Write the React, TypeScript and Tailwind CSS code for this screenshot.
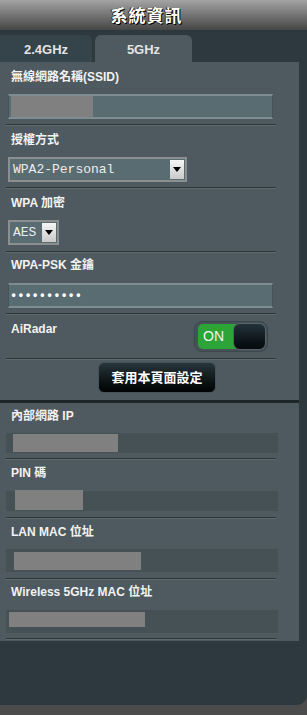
const sans = "font-['Liberation_Sans','Noto_Sans_CJK_TC',sans-serif]";
const mono = "font-['Liberation_Mono','DejaVu_Sans_Mono',monospace]";

function Sep({ pt }: { pt: string }) {
  return (
    <div className={`${pt} pl-[6px]`}>
      <div className="h-[2px] w-[270px] border-t border-b border-t-[#2c363a] border-b-[#5f6a6e]" />
    </div>
  );
}

function Label({ text, pt }: { text: string; pt: string }) {
  return (
    <div className={`${pt} pl-[11px]`}>
      <div className="h-[14px] text-[12px] font-bold leading-[14px] text-[#f2f2f2]">{text}</div>
    </div>
  );
}

function Select({ value, width }: { value: string; width: string }) {
  return (
    <div className={`${width} flex h-[25px] items-stretch border-2 border-[#8b8f90] bg-[#596c72]`}>
      <span className={`${mono} flex flex-1 items-center pl-[3px] text-[13px] text-[#ececec]`}>
        {value}
      </span>
      <span className="my-[1px] mr-[1px] flex w-[14px] items-center justify-center bg-gradient-to-b from-[#f6f6f6] to-[#c9c9c9]">
        <svg width="8" height="5" viewBox="0 0 8 5">
          <path d="M0 0h8L4 5z" fill="#000" />
        </svg>
      </span>
    </div>
  );
}

function InfoRow({
  label,
  pt,
  barPt,
  barH,
  block,
  sepPt,
}: {
  label: string;
  pt: string;
  barPt: string;
  barH: string;
  block: string;
  sepPt: string;
}) {
  return (
    <>
      <Label text={label} pt={pt} />
      <div className={`${barPt} pl-[6px]`}>
        <div className={`${barH} flex w-[272px] items-center bg-[#465156]`}>
          <div className={`${block} bg-[#808080]`} />
        </div>
      </div>
      <Sep pt={sepPt} />
    </>
  );
}

export default function App() {
  return (
    <div className={`${sans} h-[715px] w-[307px] bg-gradient-to-b from-[#3a3a3a] to-[#4c4c4c]`}>
      <div className="h-[705px] overflow-hidden rounded-br-[10px] bg-[#2e393f]">
        {/* Title */}
        <div className="flex h-[30px] items-center justify-center bg-gradient-to-b from-[#a4a4a4] to-[#474747] pt-[3px] pr-[14px]">
          <span className="text-[17px] font-bold tracking-[1px] text-white [text-shadow:1px_1px_0_#000,-1px_0_0_#222]">
            系統資訊
          </span>
        </div>

        {/* Tabs */}
        <div className="flex h-[32px] items-end gap-[3px]">
          <div className="flex h-[27px] w-[92px] items-center justify-center rounded-tr-[6px] bg-[#35434a] pt-[2px] text-[13px] font-bold text-[#e4e4e4]">
            2.4GHz
          </div>
          <div className="flex h-[27px] w-[97px] items-center justify-center rounded-t-[6px] bg-[#4e5a5f] pt-[2px] text-[13px] font-bold text-[#e4e4e4]">
            5GHz
          </div>
        </div>

        {/* Panel */}
        <div className="w-[299px] bg-[#4e5a5f] pb-[1px]">
          {/* SSID */}
          <Label text="無線網路名稱(SSID)" pt="pt-[8px]" />
          <div className="pl-[8px] pt-[10px]">
            <div className="flex h-[25px] w-[265px] items-stretch border-y-2 border-x border-y-[#7e8d91] border-x-[#44545a] bg-[#596c72] pl-[2px]">
              <div className="w-[82px] bg-[#808080]" />
            </div>
          </div>
          <Sep pt="pt-[5px]" />

          {/* Auth */}
          <Label text="授權方式" pt="pt-[7px]" />
          <div className="pl-[8px] pt-[10px]">
            <Select value="WPA2-Personal" width="w-[179px]" />
          </div>
          <Sep pt="pt-[5px]" />

          {/* WPA encryption */}
          <Label text="WPA 加密" pt="pt-[7px]" />
          <div className="pl-[8px] pt-[10px]">
            <Select value="AES" width="w-[51px]" />
          </div>
          <Sep pt="pt-[6px]" />

          {/* PSK */}
          <Label text="WPA-PSK 金鑰" pt="pt-[5px]" />
          <div className="pl-[8px] pt-[11px]">
            <div className="flex h-[25px] w-[265px] items-center border-y-2 border-x border-y-[#7e8d91] border-x-[#44545a] bg-[#596c72] pl-[1px]">
              <span className={`${mono} text-[12px] font-bold leading-none text-white`}>••••••••••</span>
            </div>
          </div>
          <Sep pt="pt-[5px]" />

          {/* AiRadar */}
          <div className="flex h-[43px] items-start justify-between">
            <Label text="AiRadar" pt="pt-[7px]" />
            <div className="pr-[31px] pt-[6px]">
              <div className="flex h-[31px] w-[74px] items-stretch rounded-[8px] border border-[#3b474b] bg-[#465257] p-[1px]">
                <div className="my-[1px] ml-[2px] flex w-[38px] items-center rounded-l-[5px] bg-[#2ca438] pl-[5px] text-[14px] font-medium text-[#eef5ee]">
                  ON
                </div>
                <div className="-ml-[3px] flex-1 rounded-[7px] border border-[#56646a] bg-gradient-to-b from-[#23323a] to-[#05090b]" />
              </div>
            </div>
          </div>
          <Sep pt="pt-0" />

          {/* Apply button */}
          <div className="flex h-[40px] pl-[98px] pt-[2px]">
            <button className="h-[31px] w-[118px] rounded-[6px] border border-[#44535a] bg-gradient-to-b from-[#28363c] to-[#020404] text-[13px] font-bold text-white">
              套用本頁面設定
            </button>
          </div>
          <div className="h-[3px] bg-[#1e2628]" />

          {/* Info */}
          <InfoRow
            label="內部網路 IP"
            pt="pt-[6px]"
            barPt="pt-[10px]"
            barH="h-[20px]"
            block="ml-[7px] h-[18px] w-[105px]"
            sepPt="pt-[5px]"
          />
          <InfoRow
            label="PIN 碼"
            pt="pt-[6px]"
            barPt="pt-[11px]"
            barH="h-[20px]"
            block="ml-[9px] h-[20px] w-[68px] -translate-y-[1px]"
            sepPt="pt-[6px]"
          />
          <InfoRow
            label="LAN MAC 位址"
            pt="pt-[6px]"
            barPt="pt-[10px]"
            barH="h-[23px]"
            block="ml-[8px] h-[18px] w-[127px]"
            sepPt="pt-[6px]"
          />
          <InfoRow
            label="Wireless 5GHz MAC 位址"
            pt="pt-[5px]"
            barPt="pt-[11px]"
            barH="h-[23px]"
            block="ml-[3px] h-[15px] w-[136px] -translate-y-[2px]"
            sepPt="pt-[5px]"
          />
        </div>
      </div>
    </div>
  );
}
